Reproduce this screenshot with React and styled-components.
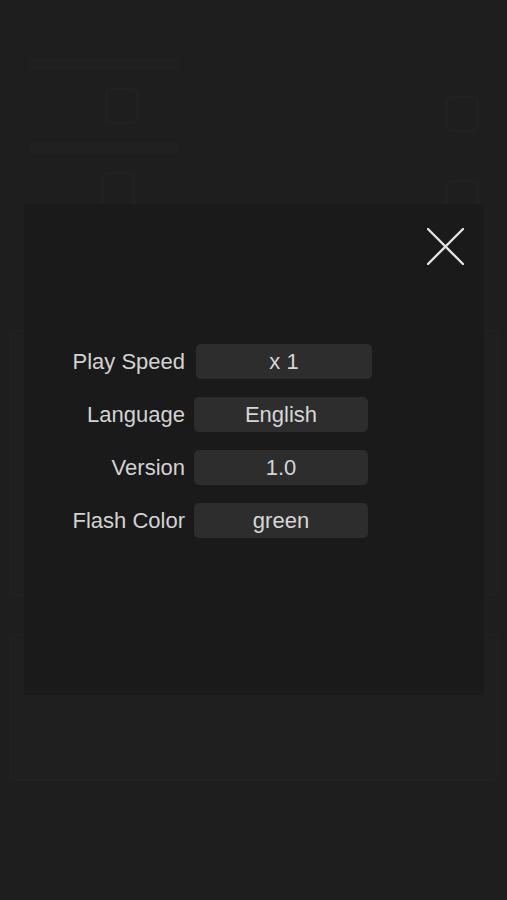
import React from "react";
import styled, { createGlobalStyle } from "styled-components";

const Global = createGlobalStyle`
  html, body { margin: 0; padding: 0; background: #1e1e1e; }
  body { font-family: "Liberation Sans", Arial, sans-serif; }
`;

const Page = styled.div`
  position: relative;
  width: 507px;
  height: 900px;
  background: #1e1e1e;
  overflow: hidden;
`;

const Backdrop = styled.div`
  display: flex;
  flex-direction: column;
  padding: 58px 8px 0 9px;
`;

const TopArea = styled.div`
  display: flex;
  justify-content: space-between;
  height: 272px;
  padding: 0 20px;
`;

const FaintCol = styled.div`
  display: flex;
  flex-direction: column;
  align-items: ${(p) => (p.$end ? "flex-end" : "flex-start")};
  gap: 18px;
`;

const FaintBar = styled.div`
  width: ${(p) => p.$w}px;
  height: 12px;
  border-radius: 3px;
  background: #202020;
`;

const FaintIcon = styled.div`
  width: 28px;
  height: 30px;
  margin-left: ${(p) => p.$ml || 0}px;
  border: 3px solid #212121;
  border-radius: 6px;
`;

const BgCard = styled.div`
  height: ${(p) => p.$h}px;
  margin-bottom: ${(p) => p.$mb || 0}px;
  border: 2px solid #212121;
  border-radius: 6px;
  background: #1f1f1f;
`;

const Overlay = styled.div`
  position: absolute;
  inset: 0;
  padding: 204px 0 0 24px;
`;

const Modal = styled.div`
  width: 460px;
  height: 491px;
  background: #1a1a1a;
  display: flex;
  flex-direction: column;
`;

const CloseRow = styled.div`
  display: flex;
  justify-content: flex-end;
  padding: 24px 20px 0 0;
`;

const CloseButton = styled.button`
  width: 37px;
  height: 37px;
  padding: 0;
  border: 0;
  background: transparent;
  display: block;
  cursor: pointer;
`;

const Form = styled.div`
  margin-top: 79px;
  display: grid;
  grid-template-columns: 161px 176px;
  column-gap: 11px;
  row-gap: 18px;
  align-items: center;
`;

const Label = styled.div`
  text-align: right;
  font-size: 22px;
  color: #d2d2d2;
  line-height: 35px;
  white-space: nowrap;
`;

const Field = styled.div`
  height: 35px;
  border-radius: 5px;
  background: #2d2d2d;
  color: #d6d6d6;
  font-size: 22px;
  line-height: 36px;
  text-align: center;
  margin-left: ${(p) => p.$shift || 0}px;
  width: ${(p) => 176 + (p.$shift || 0)}px;
`;

const rows = [
  { label: "Play Speed", value: "x 1", shift: 0 },
  { label: "Language", value: "English", shift: -2 },
  { label: "Version", value: "1.0", shift: -2 },
  { label: "Flash Color", value: "green", shift: -2 },
];

export default function App() {
  return (
    <Page>
      <Global />
      <Backdrop>
        <TopArea>
          <FaintCol>
            <FaintBar $w={150} />
            <FaintIcon $ml={76} />
            <FaintBar $w={150} />
            <FaintIcon $ml={72} />
          </FaintCol>
          <FaintCol $end>
            <div style={{ height: 20 }} />
            <FaintIcon />
            <div style={{ height: 12 }} />
            <FaintIcon />
          </FaintCol>
        </TopArea>
        <BgCard $h={262} $mb={38} />
        <BgCard $h={143} />
      </Backdrop>
      <Overlay>
        <Modal>
          <CloseRow>
            <CloseButton aria-label="Close">
              <svg width="37" height="37" viewBox="0 0 37 37">
                <path
                  d="M1 1 L36 36 M36 1 L1 36"
                  stroke="#e2e2e2"
                  strokeWidth="2.4"
                  strokeLinecap="round"
                />
              </svg>
            </CloseButton>
          </CloseRow>
          <Form>
            {rows.map((r) => (
              <React.Fragment key={r.label}>
                <Label>{r.label}</Label>
                <Field $shift={r.shift}>{r.value}</Field>
              </React.Fragment>
            ))}
          </Form>
        </Modal>
      </Overlay>
    </Page>
  );
}
